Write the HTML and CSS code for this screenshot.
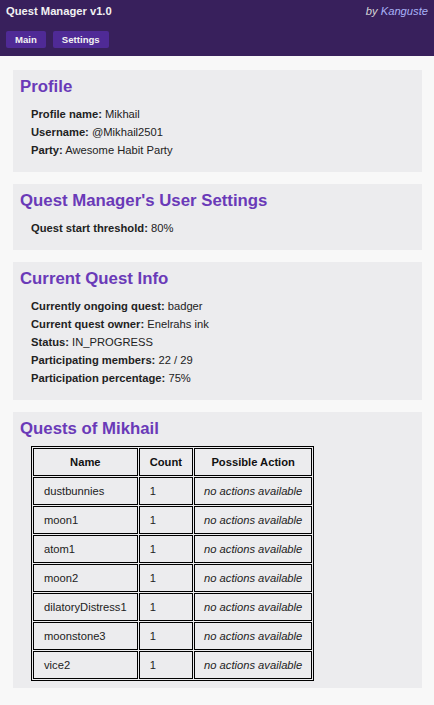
FILE: index.html
```html
<!DOCTYPE html>
<html>
<head>
<meta charset="utf-8">
<title>Quest Manager v1.0</title>
<link rel="stylesheet" href="styles.css">
</head>
<body>
<header class="topbar">
  <div class="topbar-row">
    <span class="app-title">Quest Manager v1.0</span>
    <span class="byline">by <a class="author" href="#">Kanguste</a></span>
  </div>
  <nav class="nav">
    <button class="nav-btn">Main</button>
    <button class="nav-btn">Settings</button>
  </nav>
</header>
<main class="content">
  <section class="card">
    <h2 class="card-title">Profile</h2>
    <div class="info">
      <div class="info-line"><b>Profile name:</b> Mikhail</div>
      <div class="info-line"><b>Username:</b> @Mikhail2501</div>
      <div class="info-line"><b>Party:</b> Awesome Habit Party</div>
    </div>
  </section>
  <section class="card">
    <h2 class="card-title">Quest Manager's User Settings</h2>
    <div class="info">
      <div class="info-line"><b>Quest start threshold:</b> 80%</div>
    </div>
  </section>
  <section class="card">
    <h2 class="card-title">Current Quest Info</h2>
    <div class="info">
      <div class="info-line"><b>Currently ongoing quest:</b> badger</div>
      <div class="info-line"><b>Current quest owner:</b> Enelrahs ink</div>
      <div class="info-line"><b>Status:</b> IN_PROGRESS</div>
      <div class="info-line"><b>Participating members:</b> 22 / 29</div>
      <div class="info-line"><b>Participation percentage:</b> 75%</div>
    </div>
  </section>
  <section class="card">
    <h2 class="card-title">Quests of Mikhail</h2>
    <table class="quests">
      <thead>
        <tr><th>Name</th><th>Count</th><th>Possible Action</th></tr>
      </thead>
      <tbody>
        <tr><td>dustbunnies</td><td>1</td><td class="action">no actions available</td></tr>
        <tr><td>moon1</td><td>1</td><td class="action">no actions available</td></tr>
        <tr><td>atom1</td><td>1</td><td class="action">no actions available</td></tr>
        <tr><td>moon2</td><td>1</td><td class="action">no actions available</td></tr>
        <tr><td>dilatoryDistress1</td><td>1</td><td class="action">no actions available</td></tr>
        <tr><td>moonstone3</td><td>1</td><td class="action">no actions available</td></tr>
        <tr><td>vice2</td><td>1</td><td class="action">no actions available</td></tr>
      </tbody>
    </table>
  </section>
</main>
</body>
</html>
```
FILE: styles.css
```css
html, body {
  margin: 0;
  padding: 0;
}
body {
  background: #f8f8f8;
  font-family: "Liberation Sans", Arial, sans-serif;
  font-size: 11.2px;
  color: #222;
}
.topbar {
  background: #38205c;
  padding: 5px 6px 8px;
}
.topbar-row {
  display: flex;
  justify-content: space-between;
  align-items: center;
  line-height: 13px;
}
.app-title {
  font-weight: bold;
  color: #f2f2f2;
}
.byline {
  font-style: italic;
  color: #d6d6d6;
}
.author {
  color: #a9b2f7;
  text-decoration: none;
}
.nav {
  display: flex;
  gap: 7px;
  margin-top: 13px;
}
.nav-btn {
  font-family: "Liberation Sans", Arial, sans-serif;
  font-size: 9.6px;
  font-weight: bold;
  line-height: 11px;
  color: #f2f2f2;
  background: #4f2a96;
  border: none;
  border-radius: 2px;
  padding: 3px 9px;
  margin: 0;
}
.content {
  display: flex;
  flex-direction: column;
  gap: 12px;
  padding: 14px 12px 20px 13px;
}
.card {
  background: #ececee;
  padding: 7px;
}
.card-title {
  margin: 0;
  font-size: 16.8px;
  font-weight: bold;
  line-height: 19.3px;
  color: #6a3ab8;
}
.info {
  margin: 9.5px 0 5.5px 11px;
}
.info-line {
  line-height: 17.9px;
}
.quests {
  margin: 8px 0 0 11px;
  border: 1px solid #000;
  border-spacing: 1px;
  font-size: 11.2px;
}
.quests th,
.quests td {
  border: 1px solid #000;
  padding: 6px 10px;
  line-height: 14px;
  text-align: left;
}
.quests th {
  text-align: center;
  font-weight: bold;
  color: #111;
}
.quests td.action {
  font-style: italic;
  text-align: center;
  padding: 6px 9px;
}
```
